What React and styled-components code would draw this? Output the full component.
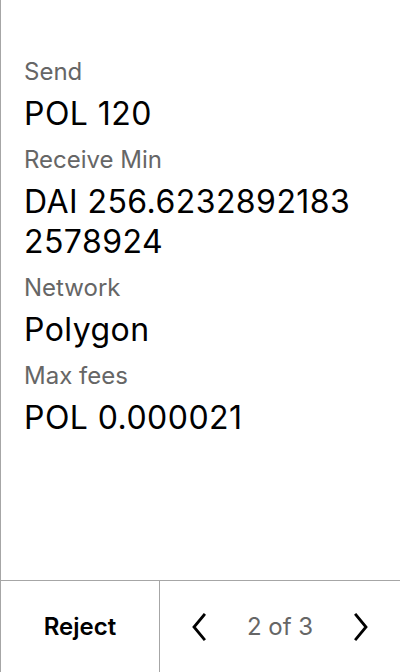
import React from "react";
import styled, { createGlobalStyle } from "styled-components";

const Global = createGlobalStyle`
  html, body { margin: 0; padding: 0; background: #fff; }
  body { font-family: Inter, "Noto Sans", sans-serif; }
  * { box-sizing: border-box; }
`;

const Screen = styled.div`
  width: 400px;
  height: 672px;
  display: flex;
  flex-direction: column;
  border-left: 1px solid #a6a6a6;
  background: #fff;
`;

const Content = styled.div`
  flex: 1;
  padding: 56px 36px 0 23px;
  display: flex;
  flex-direction: column;
`;

const Label = styled.div`
  font-size: 24px;
  line-height: 32px;
  color: #666;
  margin-top: ${(p) => (p.$first ? "0" : "10px")};
`;

const Value = styled.div`
  font-size: 32px;
  line-height: 40px;
  letter-spacing: 0.45px;
  color: #000;
  margin-top: 6px;
  word-break: break-all;
`;

const Footer = styled.div`
  height: 92px;
  border-top: 1px solid #a6a6a6;
  display: grid;
  grid-template-columns: 159px 1fr;
`;

const RejectBtn = styled.div`
  display: flex;
  align-items: center;
  justify-content: center;
  font-size: 24px;
  font-weight: 600;
  color: #000;
  border-right: 1px solid #a6a6a6;
`;

const Nav = styled.div`
  display: flex;
  align-items: center;
  justify-content: space-between;
  padding: 0 30px 0 30px;
`;

const Pager = styled.span`
  font-size: 24px;
  color: #666;
`;

const Chevron = ({ dir }) => (
  <svg width="20" height="28" viewBox="0 0 20 28">
    <path
      d={dir === "left" ? "M14 2 L4 14 L14 26" : "M6 2 L16 14 L6 26"}
      fill="none"
      stroke="#000"
      strokeWidth="2.8"
      strokeLinecap="square"
    />
  </svg>
);

const rows = [
  ["Send", "POL 120"],
  ["Receive Min", "DAI 256.62328921832578924"],
  ["Network", "Polygon"],
  ["Max fees", "POL 0.000021"],
];

export default function App() {
  return (
    <>
      <Global />
      <Screen>
        <Content>
          {rows.map(([l, v], i) => (
            <React.Fragment key={l}>
              <Label $first={i === 0}>{l}</Label>
              <Value>{v}</Value>
            </React.Fragment>
          ))}
        </Content>
        <Footer>
          <RejectBtn>Reject</RejectBtn>
          <Nav>
            <Chevron dir="left" />
            <Pager>2 of 3</Pager>
            <Chevron dir="right" />
          </Nav>
        </Footer>
      </Screen>
    </>
  );
}
